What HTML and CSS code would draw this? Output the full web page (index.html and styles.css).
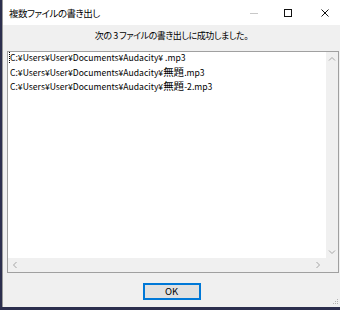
FILE: index.html
```html
<!DOCTYPE html>
<html lang="ja">
<head>
<meta charset="utf-8">
<title>複数ファイルの書き出し</title>
<link rel="stylesheet" href="styles.css">
</head>
<body>
<div class="desk">
  <div class="win">
    <div class="titlebar">
      <span class="title">複数ファイルの書き出し</span>
      <div class="ctrls">
        <svg class="ic-min" width="10" height="10" viewBox="0 0 10 10"><line x1="1" y1="5.5" x2="9" y2="5.5" stroke="#c8c8c8" stroke-width="1"/></svg>
        <svg class="ic-max" width="10" height="10" viewBox="0 0 10 10"><rect x="1.5" y="1.5" width="7" height="7" fill="none" stroke="#111" stroke-width="1"/></svg>
        <svg class="ic-close" width="10" height="10" viewBox="0 0 10 10"><path d="M1.5 1.5 L8.5 8.5 M8.5 1.5 L1.5 8.5" stroke="#111" stroke-width="1" fill="none"/></svg>
      </div>
    </div>
    <div class="msg">次の 3 ファイルの書き出しに成功しました。</div>
    <div class="list">
      <div class="rows">
        <div class="row focus">C:¥Users¥User¥Documents¥Audacity¥ .mp3</div>
        <div class="row">C:¥Users¥User¥Documents¥Audacity¥<span class="jp">無題</span>.mp3</div>
        <div class="row">C:¥Users¥User¥Documents¥Audacity¥<span class="jp">無題</span>-2.mp3</div>
      </div>
      <div class="vscroll">
        <svg width="8" height="6" viewBox="0 0 8 6"><polyline points="1,4.5 4,1.5 7,4.5" fill="none" stroke="#a6a6a6" stroke-width="1"/></svg>
        <svg width="8" height="6" viewBox="0 0 8 6"><polyline points="1,1.5 4,4.5 7,1.5" fill="none" stroke="#a6a6a6" stroke-width="1"/></svg>
      </div>
      <div class="hscroll">
        <svg width="6" height="8" viewBox="0 0 6 8"><polyline points="4.5,1 1.5,4 4.5,7" fill="none" stroke="#a6a6a6" stroke-width="1"/></svg>
        <svg width="6" height="8" viewBox="0 0 6 8"><polyline points="1.5,1 4.5,4 1.5,7" fill="none" stroke="#a6a6a6" stroke-width="1"/></svg>
      </div>
      <div class="corner"></div>
    </div>
    <div class="footer"><button class="ok">OK</button></div>
    <svg class="grip" width="7" height="7" viewBox="0 0 7 7">
      <rect x="5" y="0" width="1" height="1" fill="#b4b4b4"/>
      <rect x="3" y="2" width="1" height="1" fill="#b4b4b4"/>
      <rect x="5" y="2" width="1" height="1" fill="#b4b4b4"/>
      <rect x="1" y="4" width="1" height="1" fill="#b4b4b4"/>
      <rect x="3" y="4" width="1" height="1" fill="#b4b4b4"/>
      <rect x="5" y="4" width="1" height="1" fill="#b4b4b4"/>
    </svg>
  </div>
</div>
</body>
</html>
```

FILE: styles.css
```css
html, body {
  margin: 0;
  padding: 0;
}
body {
  width: 340px;
  height: 310px;
  overflow: hidden;
  background: #2c2f4e;
  font-family: "Noto Sans CJK JP", "Noto Sans", sans-serif;
  font-feature-settings: "palt";
  font-size: 9px;
  color: #000;
}
.desk {
  padding-left: 2px;
}
.win {
  position: relative;
  width: 338px;
  height: 307px;
  box-sizing: border-box;
  border-left: 1px solid #9a9a9a;
  background: #f0f0f0;
  display: flex;
  flex-direction: column;
}
.titlebar {
  height: 25px;
  background: #fff;
  display: flex;
  align-items: center;
  justify-content: space-between;
  flex: none;
}
.title {
  padding: 2px 0 0 6px;
  font-size: 9.5px;
  letter-spacing: -0.5px;
  line-height: 23px;
}
.ctrls {
  display: flex;
  align-items: center;
  padding: 0 10px 0 0;
}
.ic-max {
  margin-left: 24px;
}
.ic-close {
  margin-left: 27px;
}
.msg {
  height: 26px;
  line-height: 22px;
  text-align: center;
  letter-spacing: -0.45px;
  flex: none;
}
.list {
  margin: 0 1px 0 4px;
  height: 222px;
  box-sizing: border-box;
  border: 1px solid #a0a0a0;
  background: #fff;
  display: grid;
  grid-template-columns: 1fr 12px;
  grid-template-rows: 1fr 14px;
  flex: none;
}
.rows {
  padding: 0 0 0 1px;
}
.row {
  height: 14px;
  box-sizing: border-box;
  line-height: 11px;
  white-space: nowrap;
  padding-left: 1px;
  font-size: 8.6px;
  font-feature-settings: normal;
}
.jp {
  font-size: 10.5px;
}
.focus {
  border-left: 1px dotted #000;
  padding-left: 0;
  height: 11px;
  margin-bottom: 3px;
}
.vscroll {
  background: #f0f0f0;
  display: flex;
  flex-direction: column;
  justify-content: space-between;
  align-items: center;
  padding: 4px 0 3px;
}
.hscroll {
  background: #f0f0f0;
  display: flex;
  justify-content: space-between;
  align-items: center;
  padding: 0 5px 0 4px;
}
.corner {
  background: #f0f0f0;
}
.footer {
  display: flex;
  justify-content: center;
  padding-top: 10px;
}
.ok {
  width: 58px;
  height: 17px;
  box-sizing: border-box;
  border: 2px solid #0078d7;
  background: #e1e1e1;
  font-family: inherit;
  font-size: 9.5px;
  padding: 0;
  line-height: 13px;
  color: #000;
}
.grip {
  position: absolute;
  right: 1px;
  bottom: 1px;
}
```
